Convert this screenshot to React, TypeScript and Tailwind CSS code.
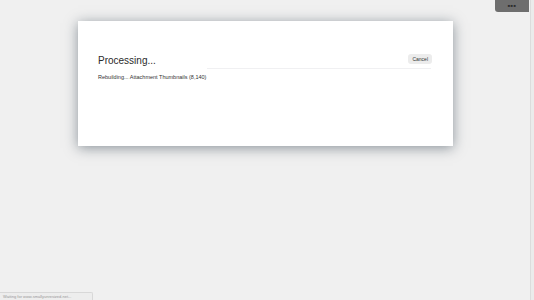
export default function App() {
  return (
    <div
      className="relative h-[300px] w-[534px] overflow-hidden bg-[#f0f0f0]"
      style={{ fontFamily: '"Liberation Sans", Arial, sans-serif' }}
    >
      {/* top-right tab */}
      <div className="absolute right-[5px] top-0 flex h-[12px] w-[34px] items-center justify-center rounded-bl-[3px] bg-[#6e6e6e]">
        <span className="text-[4px] font-bold leading-none tracking-[0.5px] text-[#2e2e2e]">■■■</span>
      </div>
      <div className="absolute right-0 top-0 h-full w-[4px] border-l border-[#dcdcdc] bg-[#ebebeb]" />

      <div className="pl-[78px] pt-[21px]">
        <div className="h-[125px] w-[375px] bg-white shadow-[0_2px_12px_rgba(40,55,70,0.5)]">
          <div className="flex items-start px-[20px] pt-[34px]">
            <div className="flex-1">
              <div className="text-[10px] leading-[12px] text-[#2a2a2a]">Processing...</div>
            </div>
            <div className="-mt-[1px] mr-[1px] rounded-[3px] bg-[#ececec] px-[4px] py-[2px] text-[5px] leading-[6px] text-[#333]">
              Cancel
            </div>
          </div>
          <div className="ml-[129px] mr-[22px] mt-[1px] h-px bg-[#f0f0f2]" />
          <div className="ml-[20px] mt-[5px] text-[5.5px] leading-[7px] text-[#333]">
            Rebuilding... Attachment Thumbnails (8,140)
          </div>
        </div>
      </div>

      {/* status bar */}
      <div className="absolute bottom-0 left-0 flex h-[8px] w-[93px] items-center rounded-tr-[2px] border-r border-t border-[#d8d8d8] bg-[#ededed] px-[3px]">
        <span className="whitespace-nowrap text-[4px] leading-none text-[#999]">
          Waiting for www.smallyunresized.net...
        </span>
      </div>
    </div>
  );
}
